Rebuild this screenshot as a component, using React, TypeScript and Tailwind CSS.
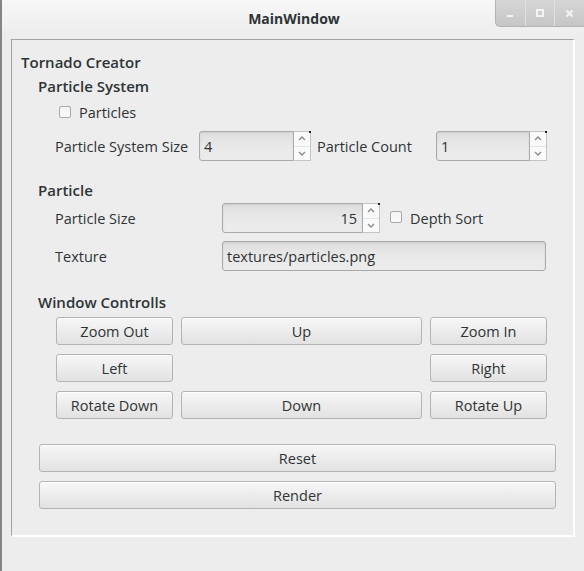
import React from 'react';

const font = { fontFamily: '"Open Sans", "Noto Sans", sans-serif' };

function Btn({ label, className = '' }: { label: string; className?: string }) {
  return (
    <button className={`h-[28px] rounded-[3px] border border-[#b4b4b4] bg-gradient-to-b from-[#f7f7f7] to-[#e2e2e2] pt-[2px] text-[14.5px] text-[#2e3436] shadow-[inset_0_1px_0_#ffffff] ${className}`}>
      {label}
    </button>
  );
}

function Check() {
  return <span className="inline-block h-[12px] w-[12px] rounded-[2px] border border-[#a9a9a9] bg-gradient-to-b from-[#f2f2f2] to-[#fbfbfb]" />;
}

function Field({ value, className = '', right = false, rounded = 'rounded-l-[3px]' }: { value: string; className?: string; right?: boolean; rounded?: string }) {
  return (
    <div className={`flex h-[30px] items-center ${rounded} border border-[#aaaaaa] bg-gradient-to-b from-[#dedede] via-[#e9e9e9] to-[#ececec] px-[4px] pt-[2px] text-[14.5px] text-[#2e3436] shadow-[inset_0_1px_2px_rgba(0,0,0,0.08)] ${right ? 'justify-end pr-[5px]' : ''} ${className}`}>
      {value}
    </div>
  );
}

function Arrows() {
  return (
    <div className="relative flex h-[30px] w-[17px] flex-col border border-l-0 border-[#c4c4c4] bg-[#fafafa]">
      <span className="absolute right-[-1px] top-[-1px] h-[2px] w-[2px] bg-[#222]" />
      <div className="flex flex-1 items-center justify-center border-b border-[#e4e4e4]">
        <svg width="8" height="5" viewBox="0 0 8 5"><path d="M1 4 L4 1 L7 4" fill="none" stroke="#8a8a8a" strokeWidth="1.3" /></svg>
      </div>
      <div className="flex flex-1 items-center justify-center">
        <svg width="8" height="5" viewBox="0 0 8 5"><path d="M1 1 L4 4 L7 1" fill="none" stroke="#8a8a8a" strokeWidth="1.3" /></svg>
      </div>
    </div>
  );
}

function SpinBox({ value, width, right = false }: { value: string; width: string; right?: boolean }) {
  return (
    <div className="flex items-center">
      <Field value={value} className={width} right={right} />
      <Arrows />
    </div>
  );
}

export default function App() {
  return (
    <div style={font} className="relative flex h-[571px] w-[584px] flex-col overflow-hidden border-l-2 border-[#858585] bg-[#ededed] text-[#2e3436]">
      {/* title bar */}
      <div className="relative flex h-[37px] items-center justify-center bg-gradient-to-b from-[#f7f7f7] to-[#ededed]">
        <span className="ml-[2px] text-[14px] font-bold text-[#2e3436]">MainWindow</span>
        <div className="absolute right-0 top-0 flex h-[27px] w-[89px] overflow-hidden rounded-bl-[5px] border-b border-l border-[#b4b4b4] bg-gradient-to-b from-[#d6d6d6] to-[#c6c6c6]">
          <div className="flex flex-1 items-end justify-center border-r border-[#e0e0e0] pb-[9px]">
            <span className="h-[2px] w-[6px] bg-[#f4f4f4]" />
          </div>
          <div className="flex flex-1 items-center justify-center border-r border-[#e0e0e0]">
            <span className="h-[8px] w-[8px] border-2 border-[#f4f4f4]" />
          </div>
          <div className="flex flex-1 items-center justify-center">
            <svg width="9" height="9" viewBox="0 0 9 9"><path d="M1.5 1.5 L7.5 7.5 M7.5 1.5 L1.5 7.5" stroke="#f4f4f4" strokeWidth="2.2" /></svg>
          </div>
        </div>
      </div>

      {/* frame */}
      <div className="ml-[9px] mt-[2px] flex h-[498px] w-[564px] flex-col border border-b-2 border-r-2 border-l-[#a3a3a3] border-t-[#a3a3a3] border-b-white border-r-white px-[9px] text-[14.5px]">
        <div className="mt-[10px] flex h-[24px] items-center text-[15px] font-semibold">Tornado Creator</div>
        <div className="ml-[17px] flex h-[24px] items-center text-[15px] font-semibold">Particle System</div>
        <div className="ml-[38px] mt-[2px] flex h-[24px] items-center gap-[8px]">
          <Check />
          <span className="pt-[2px]">Particles</span>
        </div>
        <div className="ml-[34px] mt-[7px] flex h-[30px] items-center">
          <span className="w-[144px] pt-[2px]">Particle System Size</span>
          <SpinBox value="4" width="w-[95px]" />
          <span className="ml-[6px] w-[119px] pt-[2px]">Particle Count</span>
          <SpinBox value="1" width="w-[94px]" />
        </div>
        <div className="ml-[17px] mt-[17px] flex h-[24px] items-center text-[15px] font-semibold">Particle</div>
        <div className="ml-[34px] mt-[1px] flex h-[30px] items-center">
          <span className="w-[167px] pt-[2px]">Particle Size</span>
          <SpinBox value="15" width="w-[141px]" right />
          <span className="ml-[10px]"><Check /></span>
          <span className="ml-[8px] pt-[2px]">Depth Sort</span>
        </div>
        <div className="ml-[34px] mt-[8px] flex h-[30px] items-center">
          <span className="w-[167px] pt-[2px]">Texture</span>
          <Field value="textures/particles.png" className="w-[324px]" rounded="rounded-[3px]" />
        </div>
        <div className="ml-[17px] mt-[19px] flex h-[24px] items-center pt-[1px] text-[15px] font-semibold">Window Controlls</div>
        <div className="ml-[35px] mt-[3px] grid w-[491px] grid-cols-[117px_1fr_117px] gap-x-[8px] gap-y-[9px]">
          <Btn label="Zoom Out" />
          <Btn label="Up" />
          <Btn label="Zoom In" />
          <Btn label="Left" />
          <div />
          <Btn label="Right" />
          <Btn label="Rotate Down" />
          <Btn label="Down" />
          <Btn label="Rotate Up" />
        </div>
        <div className="ml-[18px] mt-[25px] flex w-[517px] flex-col gap-[9px]">
          <Btn label="Reset" />
          <Btn label="Render" />
        </div>
      </div>
    </div>
  );
}
